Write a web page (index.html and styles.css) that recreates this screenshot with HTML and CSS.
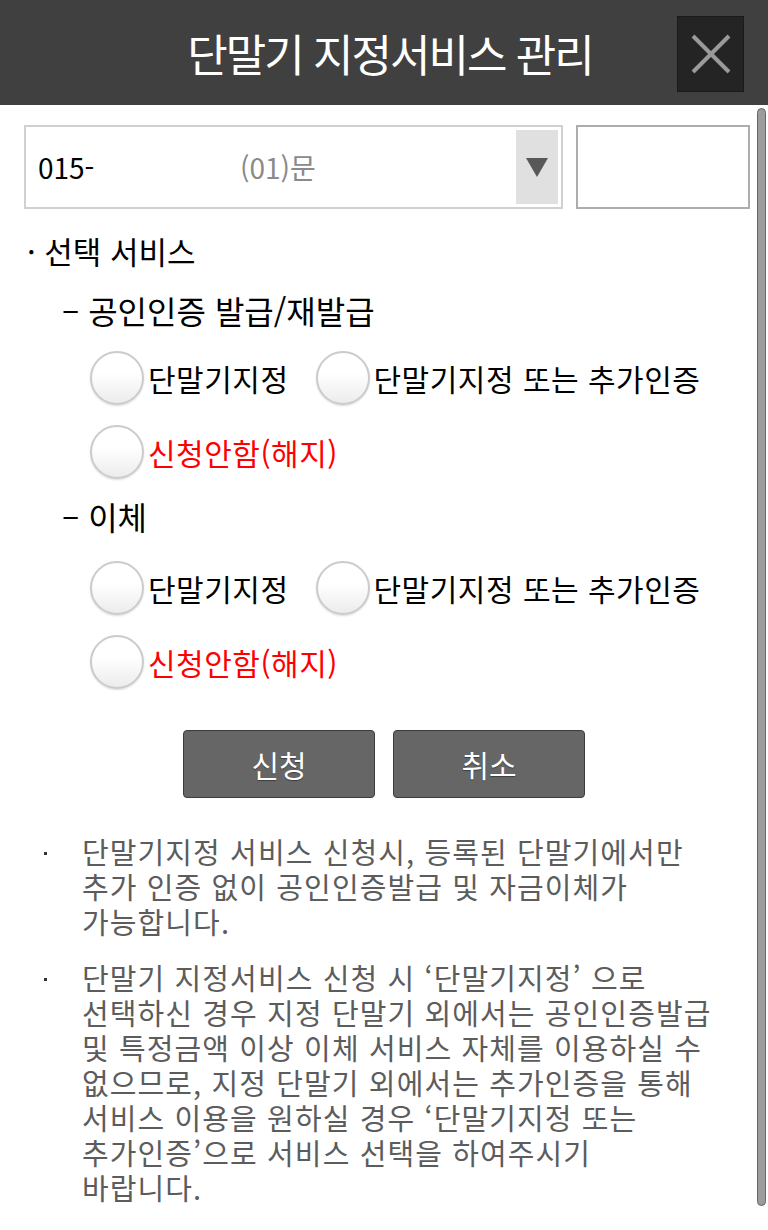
FILE: index.html
```html
<!DOCTYPE html>
<html lang="ko">
<head>
    <meta charset="UTF-8">
    <meta name="viewport" content="width=device-width, initial-scale=1.0">
    <title>단말기 지정서비스 관리</title>
    <link rel="stylesheet" href="styles.css">
</head>
<body>

    <div class="header">
        <h1>단말기 지정서비스 관리</h1>
        <button class="close" aria-label="닫기">
            <svg width="44" height="44" viewBox="0 0 44 44">
                <path d="M4 4 L40 40 M40 4 L4 40" stroke="#9a9a9a" stroke-width="4" fill="none"/>
            </svg>
        </button>
    </div>

    <div class="content">
        <div class="account-row">
            <div class="select">
                <span class="num">015-</span>
                <span class="sub">(01)문</span>
                <span class="arrow"></span>
            </div>
            <div class="pin"></div>
        </div>

        <p class="title">· 선택 서비스</p>

        <p class="group">– 공인인증 발급/재발급</p>
        <div class="radios">
            <label class="opt"><span class="circle"></span>단말기지정</label>
            <label class="opt"><span class="circle"></span>단말기지정 또는 추가인증</label>
        </div>
        <div class="radios">
            <label class="opt red"><span class="circle"></span>신청안함(해지)</label>
        </div>

        <p class="group second">– 이체</p>
        <div class="radios">
            <label class="opt"><span class="circle"></span>단말기지정</label>
            <label class="opt"><span class="circle"></span>단말기지정 또는 추가인증</label>
        </div>
        <div class="radios">
            <label class="opt red"><span class="circle"></span>신청안함(해지)</label>
        </div>

        <div class="buttons">
            <button class="btn">신청</button>
            <button class="btn">취소</button>
        </div>

        <ul class="notes">
            <li>단말기지정 서비스 신청시, 등록된 단말기에서만<br>추가 인증 없이 공인인증발급 및 자금이체가<br>가능합니다.</li>
            <li>단말기 지정서비스 신청 시 ‘단말기지정’ 으로<br>선택하신 경우 지정 단말기 외에서는 공인인증발급<br>및 특정금액 이상 이체 서비스 자체를 이용하실 수<br>없으므로, 지정 단말기 외에서는 추가인증을 통해<br>서비스 이용을 원하실 경우 ‘단말기지정 또는<br>추가인증’으로 서비스 선택을 하여주시기<br>바랍니다.</li>
        </ul>
    </div>

    <div class="scrollbar"></div>

</body>
</html>
```

FILE: styles.css
```css
body {
    margin: 0;
    background-color: #ffffff;
    font-family: "Noto Sans CJK KR", "Noto Sans", sans-serif;
    color: #000;
}
.header {
    height: 105px;
    background-color: #404040;
    display: flex;
    align-items: center;
    justify-content: center;
    padding-left: 12px;
    position: relative;
}
.header h1 {
    margin: 0;
    color: #ffffff;
    font-size: 44px;
    font-weight: normal;
    letter-spacing: -2px;
}
.close {
    position: absolute;
    left: 677px;
    top: 16px;
    width: 67px;
    height: 76px;
    padding: 0;
    border: 1px solid #1a1a1a;
    background-color: #242424;
    display: flex;
    align-items: center;
    justify-content: center;
}
.content {
    padding: 0 18px 0 24px;
}
.account-row {
    display: flex;
    gap: 13px;
    margin-top: 20px;
    height: 84px;
}
.select {
    width: 539px;
    flex: none;
    border: 2px solid #d0d0d0;
    display: flex;
    align-items: center;
    padding: 3px 3px 3px 12px;
    box-sizing: border-box;
    font-size: 28px;
}
.select .num {
    width: 202px;
}
.select .sub {
    color: #8a8a8a;
    flex: 1;
}
.select .arrow {
    width: 42px;
    height: 100%;
    background-color: #e0e0e0;
    display: flex;
    align-items: center;
    justify-content: center;
}
.select .arrow::after {
    content: "";
    border-left: 11px solid transparent;
    border-right: 11px solid transparent;
    border-top: 19px solid #585858;
}
.pin {
    width: 174px;
    flex: none;
    border: 2px solid #adadad;
    box-sizing: border-box;
}
.title {
    margin: 22px 0 0 3px;
    font-size: 31px;
    line-height: 40px;
}
.group {
    margin: 19px 0 0 38px;
    font-size: 32px;
    line-height: 40px;
}
.group.second {
    margin-top: 17px;
}
.radios {
    display: flex;
    gap: 27px;
    margin: 20px 0 0 66px;
}
.group + .radios {
    margin-top: 21px;
}
.group.second + .radios {
    margin-top: 25px;
}
.opt {
    display: flex;
    align-items: center;
    height: 54px;
    font-size: 30px;
    letter-spacing: 0.5px;
}
.opt.red {
    color: #ff0000;
}
.circle {
    width: 50px;
    height: 50px;
    border: 2px solid #cbcbcb;
    border-radius: 50%;
    background: linear-gradient(#ffffff 40%, #ececec);
    box-shadow: 0 1px 2px rgba(0, 0, 0, 0.15);
    margin-right: 4px;
    flex: none;
}
.buttons {
    display: flex;
    justify-content: center;
    gap: 18px;
    margin: 41px 0 0 -6px;
}
.btn {
    width: 192px;
    height: 68px;
    background-color: #666666;
    border: 1px solid #3c3c3c;
    border-radius: 4px;
    color: #ffffff;
    font-family: inherit;
    font-size: 30px;
    text-shadow: 0 1px 1px rgba(0, 0, 0, 0.4);
}
.notes {
    list-style: none;
    margin: 36px 0 0 0;
    padding: 0 0 0 58px;
    color: #5c5c5c;
    font-size: 29px;
    line-height: 35px;
    letter-spacing: 1.1px;
    white-space: nowrap;
}
.notes li {
    position: relative;
    margin-bottom: 21px;
}
.notes li::before {
    content: "";
    position: absolute;
    left: -38px;
    top: 18px;
    width: 3px;
    height: 3px;
    background-color: #333;
}
.scrollbar {
    position: absolute;
    left: 757px;
    top: 108px;
    width: 7px;
    height: 1096px;
    border: 1px solid #666;
    border-radius: 5px;
    background-color: #9c9c9c;
}
```
